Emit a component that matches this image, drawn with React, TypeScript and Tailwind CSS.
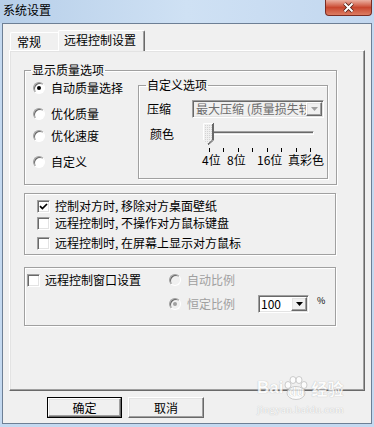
import type { ReactNode } from "react";

// classic 3D borders
const sunken =
  "border border-[#a0a0a0] border-r-white border-b-white shadow-[inset_1px_1px_0_#696969,inset_-1px_-1px_0_#e3e3e3]";
const raised =
  "border border-white border-r-[#696969] border-b-[#696969] shadow-[inset_-1px_-1px_0_#a0a0a0,inset_1px_1px_0_#e3e3e3]";
const etched = "border border-[#a0a0a0] shadow-[1px_1px_0_#fff,inset_1px_1px_0_#fff]";

function Radio({ checked = false, disabled = false }: { checked?: boolean; disabled?: boolean }) {
  return (
    <span
      className={`flex w-[12px] h-[12px] shrink-0 items-center justify-center rounded-full border border-[#a0a0a0] border-r-white border-b-white shadow-[inset_1px_1px_0_#696969] ${
        disabled ? "bg-[#f0f0f0]" : "bg-white"
      }`}
    >
      {checked && (
        <span className={`w-[4px] h-[4px] rounded-full ${disabled ? "bg-[#a0a0a0]" : "bg-black"}`} />
      )}
    </span>
  );
}

function Checkbox({ checked = false }: { checked?: boolean }) {
  return (
    <span className={`flex w-[13px] h-[13px] shrink-0 items-center justify-center bg-white ${sunken}`}>
      {checked && (
        <svg width="9" height="9" viewBox="0 0 9 9">
          <path d="M1 4.2 L3.4 6.6 L8 2" fill="none" stroke="#000" strokeWidth="1.7" />
        </svg>
      )}
    </span>
  );
}

function Arrow({ disabled = false }: { disabled?: boolean }) {
  return (
    <svg width="7" height="4" viewBox="0 0 7 4">
      <path d="M0 0 H7 L3.5 4 Z" fill={disabled ? "#a0a0a0" : "#000"} />
    </svg>
  );
}

// comma in the old bitmap font takes half a cell
function C() {
  return <span className="inline-block w-[6px]">,</span>;
}

function CheckRow({ checked, children, className }: { checked?: boolean; children: ReactNode; className: string }) {
  return (
    <div className={`flex items-center h-[14px] gap-[5px] ${className}`}>
      <Checkbox checked={checked} />
      <span className="whitespace-nowrap">{children}</span>
    </div>
  );
}

function RadioRow({
  checked,
  disabled,
  children,
  className,
}: {
  checked?: boolean;
  disabled?: boolean;
  children: ReactNode;
  className: string;
}) {
  return (
    <div className={`flex items-center h-[14px] gap-[6px] ${className}`}>
      <Radio checked={checked} disabled={disabled} />
      <span className={`whitespace-nowrap ${disabled ? "text-[#a0a0a0]" : ""}`}>{children}</span>
    </div>
  );
}

function SliderThumb() {
  return (
    <svg width="11" height="22" viewBox="0 0 11 22" className="absolute left-0 top-0">
      <defs>
        <pattern id="dots" width="2" height="2" patternUnits="userSpaceOnUse">
          <rect width="2" height="2" fill="#f0f0f0" />
          <rect width="1" height="1" fill="#d4d4d4" />
        </pattern>
      </defs>
      <path d="M0.5 0.5 H9.5 V17 L5 21.5 L0.5 17 Z" fill="url(#dots)" />
      <path d="M0.5 17 V0.5 H9.5" fill="none" stroke="#fff" />
      <path d="M10.5 0 V17.2 L5 22 M9.5 1 V17 L5 21" fill="none" stroke="#696969" />
    </svg>
  );
}

function QualityGroup() {
  return (
    <fieldset className={`ml-[14px] mt-[12px] w-[313px] h-[122px] ${etched}`}>
      <legend className="ml-[6px] px-[1px] leading-[14px]">显示质量选项</legend>
      <div className="flex">
        <div className="w-[113px] pl-[8px] flex flex-col">
          <RadioRow checked className="mt-[4px]">
            自动质量选择
          </RadioRow>
          <RadioRow className="mt-[12px]">优化质量</RadioRow>
          <RadioRow className="mt-[8px]">优化速度</RadioRow>
          <RadioRow className="mt-[12px]">自定义</RadioRow>
        </div>
        <fieldset className={`mt-[1px] w-[190px] h-[101px] ${etched}`}>
          <legend className="ml-[7px] px-[1px] leading-[14px]">自定义选项</legend>
          <div className="mt-[8px] flex items-center h-[18px] pl-[8px]">
            <span className="w-[24px]">压缩</span>
            <div className={`ml-[21px] w-[132px] h-[18px] flex items-center bg-[#f0f0f0] overflow-hidden ${sunken}`}>
              <span className="flex-1 pl-[3px] whitespace-nowrap overflow-hidden text-[#6d6d6d]">
                最大压缩 (质量损失较大)
              </span>
              <span className={`w-[16px] h-[14px] mr-[1px] shrink-0 flex items-center justify-center bg-[#f0f0f0] ${raised}`}>
                <Arrow disabled />
              </span>
            </div>
          </div>
          <div className="mt-[5px] flex items-start">
            <span className="ml-[11px] mt-[4px] w-[24px]">颜色</span>
            <div className="ml-[29px] w-[121px] flex flex-col">
              <div className="relative h-[22px]">
                <div className={`mt-[8px] ml-[4px] w-[107px] h-[4px] ${sunken}`} />
                <SliderThumb />
              </div>
              <div className="mt-[3px] ml-[6px] w-[102px] flex justify-between">
                {[0, 1, 2, 3, 4, 5, 6, 7].map((i) => (
                  <span key={i} className="w-[1px] h-[4px] bg-black" />
                ))}
              </div>
              <div className="mt-[1px] -ml-[1px] flex whitespace-nowrap leading-[14px]">
                <span className="w-[25px]">4位</span>
                <span className="w-[30px]">8位</span>
                <span className="w-[31px]">16位</span>
                <span>真彩色</span>
              </div>
            </div>
          </div>
        </fieldset>
      </div>
    </fieldset>
  );
}

function WindowGroup() {
  return (
    <div className={`ml-[14px] mt-[12px] w-[312px] h-[59px] flex ${etched}`}>
      <div className="w-[144px] pl-[2px]">
        <CheckRow className="mt-[5px]">远程控制窗口设置</CheckRow>
      </div>
      <div className="flex flex-col">
        <RadioRow disabled className="mt-[5px]">
          自动比例
        </RadioRow>
        <div className="mt-[8px] flex items-center h-[18px]">
          <RadioRow checked disabled>
            恒定比例
          </RadioRow>
          <div className={`ml-[23px] w-[51px] h-[18px] flex items-center bg-white ${sunken}`}>
            <span className="flex-1 pl-[2px]">100</span>
            <span className={`w-[16px] h-[14px] mr-[1px] flex items-center justify-center bg-[#f0f0f0] ${raised}`}>
              <Arrow />
            </span>
          </div>
          <span className="ml-[8px] self-start mt-[1px] text-[9px] leading-[10px]">%</span>
        </div>
      </div>
    </div>
  );
}

function Watermark() {
  return (
    <div className="absolute left-[257px] top-[376px] flex flex-col items-start text-white opacity-80 [text-shadow:0_0_1px_#9a9a9a] pointer-events-none">
      <div className="flex items-center h-[24px] font-['Liberation_Sans',sans-serif] font-bold text-[17px] leading-[20px]">
        <span>Bai</span>
        <span className="relative flex items-end justify-center w-[26px] h-[24px]">
          <svg width="26" height="24" viewBox="0 0 26 24" className="absolute left-0 top-0">
            <g fill="#fff" stroke="#b5b5b5" strokeWidth="0.8">
              <ellipse cx="5" cy="9" rx="3" ry="3.5" />
              <ellipse cx="10" cy="4" rx="3" ry="3.5" />
              <ellipse cx="16" cy="4" rx="3" ry="3.5" />
              <ellipse cx="21" cy="9" rx="3" ry="3.5" />
              <ellipse cx="13" cy="17" rx="9" ry="6.5" />
            </g>
          </svg>
          <span className="relative text-[13px] leading-[14px] mb-[1px] text-white">du</span>
        </span>
        <span className="ml-[2px] font-['Noto_Sans_CJK_SC',sans-serif] text-[16px]">经验</span>
      </div>
      <span className="mt-[3px] font-['Liberation_Serif',serif] text-[11px] leading-[12px] tracking-[0.3px]">
        jingyan.baidu.com
      </span>
    </div>
  );
}

export default function App() {
  return (
    <div className="relative w-[374px] h-[427px] overflow-hidden flex flex-col bg-[#c4d9f0] text-black text-[12px] leading-[14px] font-['Noto_Sans_CJK_SC',sans-serif]">
      {/* title bar */}
      <div className="h-[23px] shrink-0 flex items-start bg-linear-to-r from-[#b7cfe9] via-[#cfe1f4] to-[#c2d7ef]">
        <span className="ml-[3px] mt-[3px]">系统设置</span>
        <div className="ml-auto mr-[2px] w-[47px] h-[16px] rounded-b-[4px] border border-t-0 border-[#7a2c22] bg-linear-to-b from-[#eab0a2] via-[#c8462e] to-[#dc7c62] flex items-center justify-center">
          <svg width="13" height="11" viewBox="0 0 13 11">
            <path d="M2.5 1.5 L10.5 9.5 M10.5 1.5 L2.5 9.5" stroke="#4a1a12" strokeWidth="3.6" />
            <path d="M2.5 1.5 L10.5 9.5 M10.5 1.5 L2.5 9.5" stroke="#fff" strokeWidth="2" />
          </svg>
        </div>
      </div>

      {/* client area */}
      <div className="mx-[2px] mb-[3px] flex-1 flex flex-col border border-[#6d7f95] bg-[#f0f0f0]">
        {/* tabs */}
        <div className="relative z-10 mt-[6px] ml-[7px] h-[21px] -mb-[1px] flex items-end">
          <div className={`w-[48px] h-[19px] pl-[6px] pt-[2px] rounded-tl-[2px] ${raised} border-b-0 shadow-none border-r-0`}>
            常规
          </div>
          <div className="w-[87px] h-[21px] pl-[5px] pt-[2px] bg-[#f0f0f0] border border-b-0 border-white border-r-[#696969] rounded-t-[2px] shadow-[inset_-1px_0_0_#a0a0a0]">
            远程控制设置
          </div>
        </div>

        {/* tab page */}
        <div className={`ml-[6px] w-[356px] h-[341px] flex flex-col ${raised}`}>
          <QualityGroup />
          <div className={`ml-[14px] mt-[8px] w-[312px] h-[62px] pl-[12px] flex flex-col ${etched}`}>
            <CheckRow checked className="mt-[5px]">
              控制对方时<C />移除对方桌面壁纸
            </CheckRow>
            <CheckRow className="mt-[3px]">
              远程控制时<C />不操作对方鼠标键盘
            </CheckRow>
            <CheckRow className="mt-[6px]">
              远程控制时<C />在屏幕上显示对方鼠标
            </CheckRow>
          </div>
          <WindowGroup />
        </div>

        {/* buttons */}
        <div className="mt-[6px] ml-[44px] flex gap-[6px]">
          <div className="w-[75px] h-[21px] border border-black">
            <div className={`w-full h-full flex items-center justify-center ${raised}`}>确定</div>
          </div>
          <div className={`w-[76px] h-[21px] flex items-center justify-center ${raised}`}>取消</div>
        </div>
      </div>

      <Watermark />
    </div>
  );
}
